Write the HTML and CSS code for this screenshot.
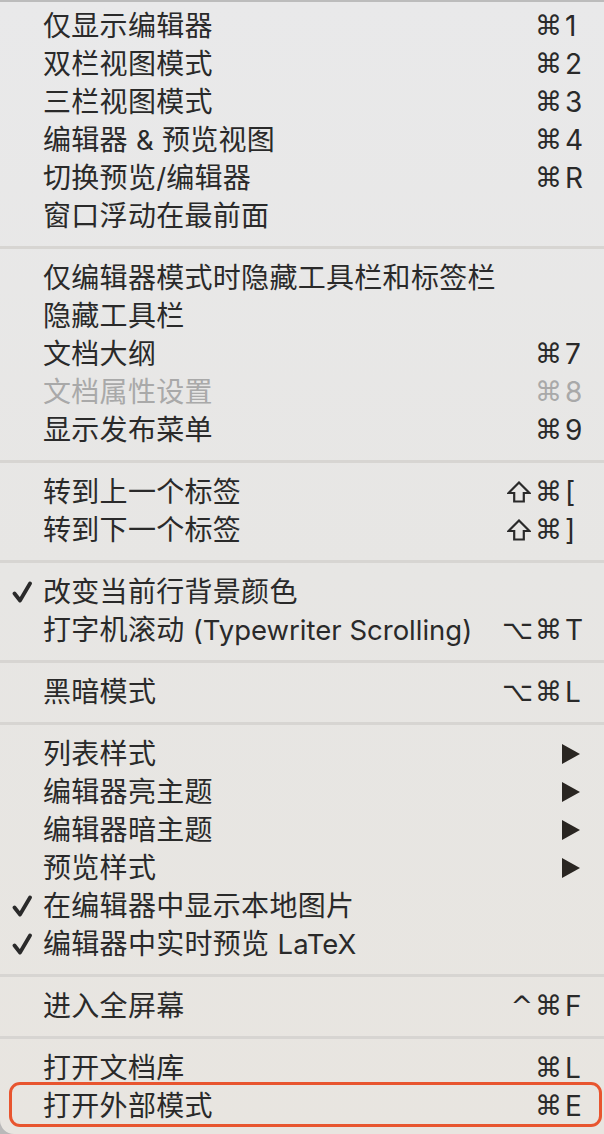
FILE: index.html
```html
<!DOCTYPE html>
<html lang="zh-CN">
<head>
<meta charset="utf-8">
<title>视图菜单</title>
<link rel="stylesheet" href="styles.css">
</head>
<body>
<div class="menu">
  <div class="group">
    <div class="item"><span class="check"></span><span class="label">仅显示编辑器</span><span class="mods">⌘</span><span class="key">1</span></div>
    <div class="item"><span class="check"></span><span class="label">双栏视图模式</span><span class="mods">⌘</span><span class="key">2</span></div>
    <div class="item"><span class="check"></span><span class="label">三栏视图模式</span><span class="mods">⌘</span><span class="key">3</span></div>
    <div class="item"><span class="check"></span><span class="label">编辑器 <span class="latin">&amp;</span> 预览视图</span><span class="mods">⌘</span><span class="key">4</span></div>
    <div class="item"><span class="check"></span><span class="label">切换预览<span class="latin">/</span>编辑器</span><span class="mods">⌘</span><span class="key">R</span></div>
    <div class="item"><span class="check"></span><span class="label">窗口浮动在最前面</span><span class="mods"></span><span class="key"></span></div>
  </div>
  <div class="sep"></div>
  <div class="group">
    <div class="item"><span class="check"></span><span class="label">仅编辑器模式时隐藏工具栏和标签栏</span><span class="mods"></span><span class="key"></span></div>
    <div class="item"><span class="check"></span><span class="label">隐藏工具栏</span><span class="mods"></span><span class="key"></span></div>
    <div class="item"><span class="check"></span><span class="label">文档大纲</span><span class="mods">⌘</span><span class="key">7</span></div>
    <div class="item disabled"><span class="check"></span><span class="label">文档属性设置</span><span class="mods">⌘</span><span class="key">8</span></div>
    <div class="item"><span class="check"></span><span class="label">显示发布菜单</span><span class="mods">⌘</span><span class="key">9</span></div>
  </div>
  <div class="sep"></div>
  <div class="group">
    <div class="item"><span class="check"></span><span class="label">转到上一个标签</span><span class="mods"><svg class="shift" viewBox="0 0 24 22" width="24" height="22"><path d="M12 1.5 L22.5 12 L16.8 12 L16.8 20.5 L7.2 20.5 L7.2 12 L1.5 12 Z" fill="none" stroke="#2a2a2a" stroke-width="2.2" stroke-linejoin="miter"/></svg>⌘</span><span class="key">[</span></div>
    <div class="item"><span class="check"></span><span class="label">转到下一个标签</span><span class="mods"><svg class="shift" viewBox="0 0 24 22" width="24" height="22"><path d="M12 1.5 L22.5 12 L16.8 12 L16.8 20.5 L7.2 20.5 L7.2 12 L1.5 12 Z" fill="none" stroke="#2a2a2a" stroke-width="2.2" stroke-linejoin="miter"/></svg>⌘</span><span class="key">]</span></div>
  </div>
  <div class="sep"></div>
  <div class="group">
    <div class="item"><span class="check"><svg viewBox="0 0 20 22" width="20" height="22"><path d="M2.5 12.5 L8 19.5 L18 2.5" fill="none" stroke="#2a2a2a" stroke-width="3.8" stroke-linecap="round" stroke-linejoin="round"/></svg></span><span class="label">改变当前行背景颜色</span><span class="mods"></span><span class="key"></span></div>
    <div class="item"><span class="check"></span><span class="label">打字机滚动 <span class="latin">(Typewriter Scrolling)</span></span><span class="mods">⌥⌘</span><span class="key">T</span></div>
  </div>
  <div class="sep"></div>
  <div class="group">
    <div class="item"><span class="check"></span><span class="label">黑暗模式</span><span class="mods">⌥⌘</span><span class="key">L</span></div>
  </div>
  <div class="sep"></div>
  <div class="group">
    <div class="item"><span class="check"></span><span class="label">列表样式</span><span class="mods"></span><span class="key"><span class="arrow"></span></span></div>
    <div class="item"><span class="check"></span><span class="label">编辑器亮主题</span><span class="mods"></span><span class="key"><span class="arrow"></span></span></div>
    <div class="item"><span class="check"></span><span class="label">编辑器暗主题</span><span class="mods"></span><span class="key"><span class="arrow"></span></span></div>
    <div class="item"><span class="check"></span><span class="label">预览样式</span><span class="mods"></span><span class="key"><span class="arrow"></span></span></div>
    <div class="item"><span class="check"><svg viewBox="0 0 20 22" width="20" height="22"><path d="M2.5 12.5 L8 19.5 L18 2.5" fill="none" stroke="#2a2a2a" stroke-width="3.8" stroke-linecap="round" stroke-linejoin="round"/></svg></span><span class="label">在编辑器中显示本地图片</span><span class="mods"></span><span class="key"></span></div>
    <div class="item"><span class="check"><svg viewBox="0 0 20 22" width="20" height="22"><path d="M2.5 12.5 L8 19.5 L18 2.5" fill="none" stroke="#2a2a2a" stroke-width="3.8" stroke-linecap="round" stroke-linejoin="round"/></svg></span><span class="label">编辑器中实时预览 <span class="latin">LaTeX</span></span><span class="mods"></span><span class="key"></span></div>
  </div>
  <div class="sep"></div>
  <div class="group">
    <div class="item"><span class="check"></span><span class="label">进入全屏幕</span><span class="mods">^⌘</span><span class="key">F</span></div>
  </div>
  <div class="sep"></div>
  <div class="group">
    <div class="item"><span class="check"></span><span class="label">打开文档库</span><span class="mods">⌘</span><span class="key">L</span></div>
    <div class="item highlighted"><span class="check"></span><span class="label">打开外部模式</span><span class="mods">⌘</span><span class="key">E</span></div>
  </div>
</div>
</body>
</html>
```

FILE: styles.css
```css
* { box-sizing: border-box; }

html, body {
  margin: 0;
  padding: 0;
}

body {
  width: 604px;
  height: 1134px;
  background: #b9b9b9;
  overflow: hidden;
  font-family: "Inter", "Noto Sans CJK SC", sans-serif;
}

.menu {
  width: 604px;
  height: 1134px;
  border-top: 2px solid #bcbcbc;
  border-bottom-left-radius: 14px;
  padding-top: 5px;
  background: linear-gradient(180deg, #e9e9ea 0%, #e7e6e4 50%, #e8e5e0 100%);
  color: #2a2a2a;
  display: flex;
  flex-direction: column;
}

.item {
  height: 38px;
  display: grid;
  grid-template-columns: 43px 1fr auto 22px;
  align-items: center;
  padding-right: 17px;
  font-size: 28px;
  line-height: 38px;
  white-space: nowrap;
}

.check {
  display: flex;
  align-items: center;
  padding-left: 12px;
  height: 38px;
}

.check svg { display: block; }

.label {
  letter-spacing: 0.3px;
}

.latin {
  letter-spacing: 0;
  font-size: 27.5px;
}

.mods {
  font-family: "DejaVu Sans", sans-serif;
  font-size: 27px;
  text-align: right;
  padding-right: 1px;
  letter-spacing: 2px;
  display: flex;
  align-items: center;
  justify-content: flex-end;
  height: 38px;
}

.shift {
  display: block;
  margin-right: 4px;
}

.key {
  font-family: "Inter", "Noto Sans CJK SC", sans-serif;
  font-size: 28px;
  display: flex;
  align-items: center;
  height: 38px;
}

.arrow {
  display: block;
  width: 0;
  height: 0;
  margin-left: -3px;
  border-top: 10px solid transparent;
  border-bottom: 10px solid transparent;
  border-left: 18px solid #2a2622;
}

.disabled { color: #a9a9a9; }

.disabled .mods { color: #a9a9a9; }

.sep {
  height: 24px;
  display: flex;
  align-items: center;
}

.sep::before {
  content: "";
  display: block;
  width: 100%;
  height: 3px;
  background: #d7d5d2;
}

.highlighted { position: relative; }

.highlighted::after {
  content: "";
  position: absolute;
  left: 9px;
  right: 2px;
  top: -5px;
  bottom: -2px;
  border: 3.5px solid #e8552f;
  border-radius: 11px;
  pointer-events: none;
}
```
